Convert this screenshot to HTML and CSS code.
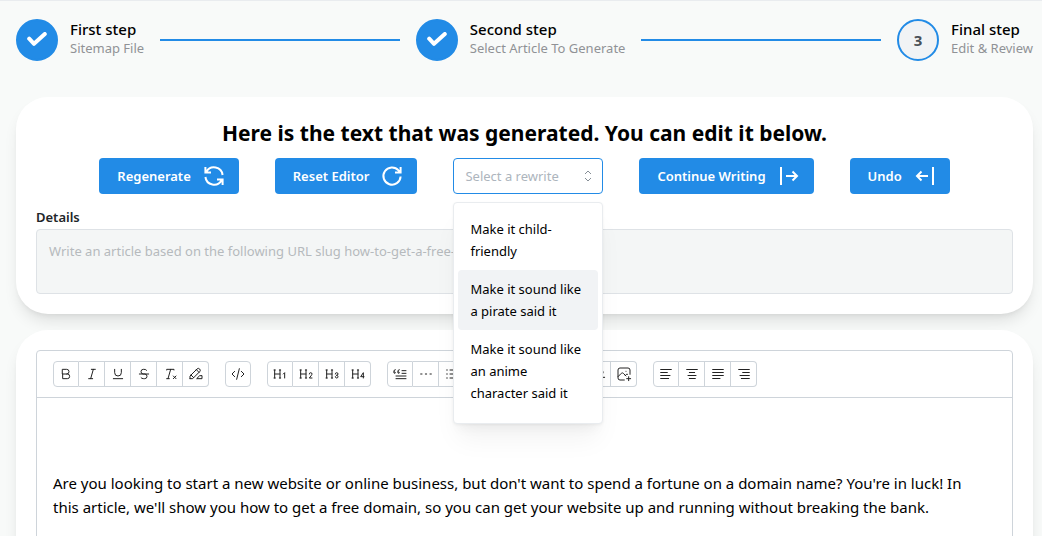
FILE: index.html
```html
<!DOCTYPE html>
<html lang="en">
<head>
<meta charset="utf-8">
<meta name="viewport" content="width=device-width, initial-scale=1">
<title>Edit &amp; Review</title>
<link rel="stylesheet" href="styles.css">
</head>
<body>
<main class="shell">
  <nav class="stepper" aria-label="Progress">
    <button class="step" type="button">
      <span class="step-icon step-done"><svg width="20" height="16" viewBox="0 0 20 16"><path d="M2.2 6.7 7 11.8 17.8 2" fill="none" stroke="#fff" stroke-width="4" stroke-linecap="round" stroke-linejoin="round"/></svg></span>
      <span class="step-body"><span class="step-label">First step</span><span class="step-note">Sitemap File</span></span>
    </button>
    <span class="step-line"></span>
    <button class="step" type="button">
      <span class="step-icon step-done"><svg width="20" height="16" viewBox="0 0 20 16"><path d="M2.2 6.7 7 11.8 17.8 2" fill="none" stroke="#fff" stroke-width="4" stroke-linecap="round" stroke-linejoin="round"/></svg></span>
      <span class="step-body"><span class="step-label">Second step</span><span class="step-note">Select Article To Generate</span></span>
    </button>
    <span class="step-line"></span>
    <button class="step" type="button">
      <span class="step-icon">3</span>
      <span class="step-body"><span class="step-label">Final step</span><span class="step-note">Edit &amp; Review</span></span>
    </button>
  </nav>

  <section class="card">
    <h1 class="title">Here is the text that was generated. You can edit it below.</h1>
    <div class="actions">
      <button class="btn" type="button">Regenerate
        <svg class="btn-icon" viewBox="0 0 24 24"><path d="M20.600 11A8.700 8.700 0 0 0 4.400 7.800M3.400 3v5.600H9M3.400 13a8.700 8.700 0 0 0 16.200 3.200M20.600 21v-5.600H15"/></svg>
      </button>
      <button class="btn" type="button">Reset Editor
        <svg class="btn-icon" viewBox="0 0 24 24"><path d="M20.600 12.500A8.600 8.600 0 1 1 18.500 6.400L20.500 8.500M20.600 3v5.600H15"/></svg>
      </button>
      <div class="picker">
        <select class="picker-input" aria-label="Select a rewrite"><option>Select a rewrite</option></select>
        <svg class="picker-icon" viewBox="0 0 12 14"><path d="M3 5 6 2 9 5M3 9 6 12 9 9"/></svg>
        <ul class="menu" role="listbox">
          <li class="option" role="option">Make it child-friendly</li>
          <li class="option option-active" role="option">Make it sound like a pirate said it</li>
          <li class="option" role="option">Make it sound like an anime character said it</li>
        </ul>
      </div>
      <button class="btn" type="button">Continue Writing
        <svg class="btn-icon" viewBox="0 0 24 24"><path d="M4 3v18M9 12h11M15.500 7.500 20 12l-4.500 4.500"/></svg>
      </button>
      <button class="btn" type="button">Undo
        <svg class="btn-icon" viewBox="0 0 24 24"><path d="M20 3v18M15 12H4M8.500 7.500 4 12l4.500 4.500"/></svg>
      </button>
    </div>
    <label class="field-label" for="details">Details</label>
    <textarea class="details" id="details" disabled placeholder="Write an article based on the following URL slug how-to-get-a-free-domain"></textarea>
  </section>

  <section class="card">
    <div class="editor">
      <div class="toolbar" role="toolbar">
        <div class="group">
          <button class="tool" type="button" aria-label="Bold"><svg viewBox="0 0 24 24"><path d="M7 5h6a3.500 3.500 0 0 1 0 7H7zM13 12h1a3.500 3.500 0 0 1 0 7H7v-7"/></svg></button>
          <button class="tool" type="button" aria-label="Italic"><svg viewBox="0 0 24 24"><path d="M11 5h6M7 19h6M14 5l-4 14"/></svg></button>
          <button class="tool" type="button" aria-label="Underline"><svg viewBox="0 0 24 24"><path d="M7 5v5a5 5 0 0 0 10 0V5M5 19h14"/></svg></button>
          <button class="tool" type="button" aria-label="Strikethrough"><svg viewBox="0 0 24 24"><path d="M5 12h14M16 6.500A4 2 0 0 0 12 5h-1a3.500 3.500 0 0 0 0 7h2a3.500 3.500 0 0 1 0 7h-1.500a4 2 0 0 1-4-1.500"/></svg></button>
          <button class="tool" type="button" aria-label="Clear formatting"><svg viewBox="0 0 24 24"><path d="m17 15 4 4m0-4-4 4M7 6V5h11v1M7 19h4M13 5 9 19"/></svg></button>
          <button class="tool" type="button" aria-label="Highlight"><svg viewBox="0 0 24 24"><path d="M3 19h4L17.500 8.500a2.800 2.800 0 0 0-4-4L3 15v4M12.500 5.500l4 4M4.500 13.500l4 4M21 15v4h-8l4-4z"/></svg></button>
        </div>
        <div class="group">
          <button class="tool" type="button" aria-label="Code"><svg viewBox="0 0 24 24"><path d="m7 8-4 4 4 4M17 8l4 4-4 4M14 4l-4 16"/></svg></button>
        </div>
        <div class="group">
          <button class="tool" type="button" aria-label="Heading 1"><svg viewBox="0 0 24 24"><path d="M19 18v-8l-2 2M4 6v12M12 6v12M11 18h2M3 18h2M4 12h8M3 6h2M11 6h2"/></svg></button>
          <button class="tool" type="button" aria-label="Heading 2"><svg viewBox="0 0 24 24"><path d="M17 12a2 2 0 1 1 4 0c0 .6-.4 1.200-.7 1.700L17 18h4M4 6v12M12 6v12M11 18h2M3 18h2M4 12h8M3 6h2M11 6h2"/></svg></button>
          <button class="tool" type="button" aria-label="Heading 3"><svg viewBox="0 0 24 24"><path d="M19 14a2 2 0 1 0-2-2M17 16a2 2 0 1 0 2-2M4 6v12M12 6v12M11 18h2M3 18h2M4 12h8M3 6h2M11 6h2"/></svg></button>
          <button class="tool" type="button" aria-label="Heading 4"><svg viewBox="0 0 24 24"><path d="M20 18v-8l-4 6h5M4 6v12M12 6v12M11 18h2M3 18h2M4 12h8M3 6h2M11 6h2"/></svg></button>
        </div>
        <div class="group">
          <button class="tool" type="button" aria-label="Quote"><svg viewBox="0 0 24 24"><path d="M6 15h15M21 19H6M15 11h6M21 7h-6M9 9h1a1 1 0 1 1-1 1V7.500A2 2 0 0 1 11 5.500M3 9h1a1 1 0 1 1-1 1V7.500A2 2 0 0 1 5 5.500"/></svg></button>
          <button class="tool" type="button" aria-label="Horizontal line"><svg viewBox="0 0 24 24"><path d="M4 12h2M11 12h2M18 12h2"/></svg></button>
          <button class="tool" type="button" aria-label="Bullet list"><svg viewBox="0 0 24 24"><path d="M9 6h11M9 12h11M9 18h11M4 6h1M4 12h1M4 18h1"/></svg></button>
          <button class="tool" type="button" aria-label="Ordered list"><svg viewBox="0 0 24 24"><path d="M11 6h9M11 12h9M12 18h8M4 16a2 2 0 1 1 4 0c0 .6-.5 1-1 1.500L4 20h4M6 10V4L4 6"/></svg></button>
          <button class="tool" type="button" aria-label="Subscript"><svg viewBox="0 0 24 24"><path d="m5 7 8 10M5 17l8-10M21 20h-4l3.500-4a1.700 1.700 0 1 0-3.500-1"/></svg></button>
          <button class="tool" type="button" aria-label="Superscript"><svg viewBox="0 0 24 24"><path d="m5 7 8 10M5 17l8-10M21 11h-4l3.500-4A1.700 1.700 0 1 0 17 6"/></svg></button>
        </div>
        <div class="group">
          <button class="tool" type="button" aria-label="Link"><svg viewBox="0 0 24 24"><path d="m9 15 6-6M11 6l.5-.5a5 5 0 0 1 7 7L18 13M13 18l-.4.500a5 5 0 0 1-7-7L6 11"/></svg></button>
          <button class="tool" type="button" aria-label="Remove link"><svg viewBox="0 0 24 24"><path d="M17 22v-2M9 15l6-6M11 6l.5-.5a5 5 0 0 1 7 7L18 13M13 18l-.4.500a5 5 0 0 1-7-7L6 11M20 17h2M2 7h2M7 2v2"/></svg></button>
          <button class="tool" type="button" aria-label="Add image"><svg viewBox="0 0 24 24"><path d="M15 8h.01M12.500 21H6a3 3 0 0 1-3-3V6a3 3 0 0 1 3-3h12a3 3 0 0 1 3 3v6.500M3 16l5-5c1-.9 2-.9 3 0l4 4M14 14l1-1c.7-.6 1.500-.9 2.300-.6M16 19h6M19 16v6"/></svg></button>
        </div>
        <div class="group">
          <button class="tool" type="button" aria-label="Align left"><svg viewBox="0 0 24 24"><path d="M4 5.250h16M4 9.750h10M4 14.250h14M4 18.750h12"/></svg></button>
          <button class="tool" type="button" aria-label="Align center"><svg viewBox="0 0 24 24"><path d="M4 5.250h16M8 9.750h8M6 14.250h12M8 18.750h9"/></svg></button>
          <button class="tool" type="button" aria-label="Justify"><svg viewBox="0 0 24 24"><path d="M4 5.250h16M4 9.750h16M4 14.250h16M4 18.750h11"/></svg></button>
          <button class="tool" type="button" aria-label="Align right"><svg viewBox="0 0 24 24"><path d="M4 5.250h16M10 9.750h10M6 14.250h14M8 18.750h12"/></svg></button>
        </div>
      </div>
      <article class="content">
        <p>Are you looking to start a new website or online business, but don't want to spend a fortune on a domain name? You're in luck! In this article, we'll show you how to get a free domain, so you can get your website up and running without breaking the bank.</p>
      </article>
    </div>
  </section>
</main>
</body>
</html>
```
FILE: styles.css
```css
* { box-sizing: border-box; }
body { margin: 0; background: #f8faf9; color: #000; font-family: "Noto Sans", "Open Sans", sans-serif; font-size: 15px; }
button, select, textarea { font-family: inherit; margin: 0; }
.shell { height: 100vh; overflow: hidden; border-top: 1px solid #e9ecef; padding: 18px 9px 0 16px; }
.stepper { display: flex; align-items: center; margin-bottom: 36px; }
.step { display: flex; align-items: center; gap: 12px; padding: 0; border: 0; background: none; text-align: left; color: #000; white-space: nowrap; }
.step-icon { display: flex; align-items: center; justify-content: center; width: 42px; height: 42px; border: 2px solid #228be6; border-radius: 50%; background: #f1f3f5; color: #495057; font-size: 15px; font-weight: 700; }
.step-done { background: #228be6; }
.step-body { display: flex; flex-direction: column; padding-bottom: 4px; }
.step-label { font-size: 15px; font-weight: 500; line-height: 20px; }
.step-note { font-size: 13px; line-height: 18px; color: #909296; }
.step-line { flex: 1; height: 2px; margin: 0 16px; background: #228be6; }
.card { margin-bottom: 16px; padding: 20px; border-radius: 32px; background: #fff; box-shadow: 0 10px 15px -3px rgba(0,0,0,.1), 0 4px 6px -4px rgba(0,0,0,.1); }
.title { margin: 0 0 9px; font-size: 21px; line-height: 32px; font-weight: 700; text-align: center; }
.actions { display: flex; justify-content: center; gap: 36px; margin-bottom: 12px; }
.btn { display: flex; align-items: center; gap: 11px; height: 36px; padding: 0 13px 0 18px; border: 0; border-radius: 4px; background: #228be6; color: #fff; font-size: 13px; font-weight: 600; white-space: nowrap; }
.btn-icon { width: 24px; height: 24px; fill: none; stroke: #fff; stroke-width: 2; }
.picker { position: relative; width: 150px; }
.picker-input { appearance: none; width: 100%; height: 36px; padding: 0 30px 0 11px; border: 1px solid #228be6; border-radius: 4px; background: #fff; color: #adb5bd; font-size: 13px; }
.picker-icon { position: absolute; top: 11px; right: 9px; width: 12px; height: 14px; fill: none; stroke: #868e96; stroke-width: 1; pointer-events: none; }
.menu { position: absolute; z-index: 2; top: 44px; left: 0; width: 100%; margin: 0; padding: 7px 4px 11px; list-style: none; border: 1px solid #e9ecef; border-radius: 4px; background: #fff; box-shadow: 0 1px 3px rgba(0,0,0,.05), 0 20px 25px -5px rgba(0,0,0,.05), 0 10px 10px -5px rgba(0,0,0,.04); }
.option { padding: 8px 12px; border-radius: 4px; font-size: 13px; line-height: 22px; }
.option-active { background: #f1f3f5; }
.field-label { display: block; margin-bottom: 1px; font-size: 13px; font-weight: 600; line-height: 22px; color: #212529; }
.details { display: block; width: 100%; height: 65px; padding: 10px 12px; resize: none; border: 1px solid #dee2e6; border-radius: 4px; background: #f4f6f6; font-size: 13px; line-height: 22px; }
.details::placeholder { color: #b6babd; }
.editor { min-height: 300px; border: 1px solid #ced4da; border-radius: 4px; }
.toolbar { display: flex; gap: 16px; padding: 10px 16px; border-bottom: 1px solid #ced4da; }
.group { display: flex; }
.tool { display: flex; align-items: center; justify-content: center; width: 26px; height: 26px; padding: 0; border: 1px solid #ced4da; border-left-width: 0; background: #fff; }
.tool:first-child { border-left-width: 1px; border-radius: 4px 0 0 4px; }
.tool:last-child { border-radius: 0 4px 4px 0; }
.tool:only-child { border-radius: 4px; }
.tool svg { width: 16px; height: 16px; fill: none; stroke: #222; stroke-width: 1.5; stroke-linecap: round; stroke-linejoin: round; }
.content { padding: 73px 32px 16px 16px; }
.content p { margin: 0; font-size: 15px; line-height: 24px; }
```
